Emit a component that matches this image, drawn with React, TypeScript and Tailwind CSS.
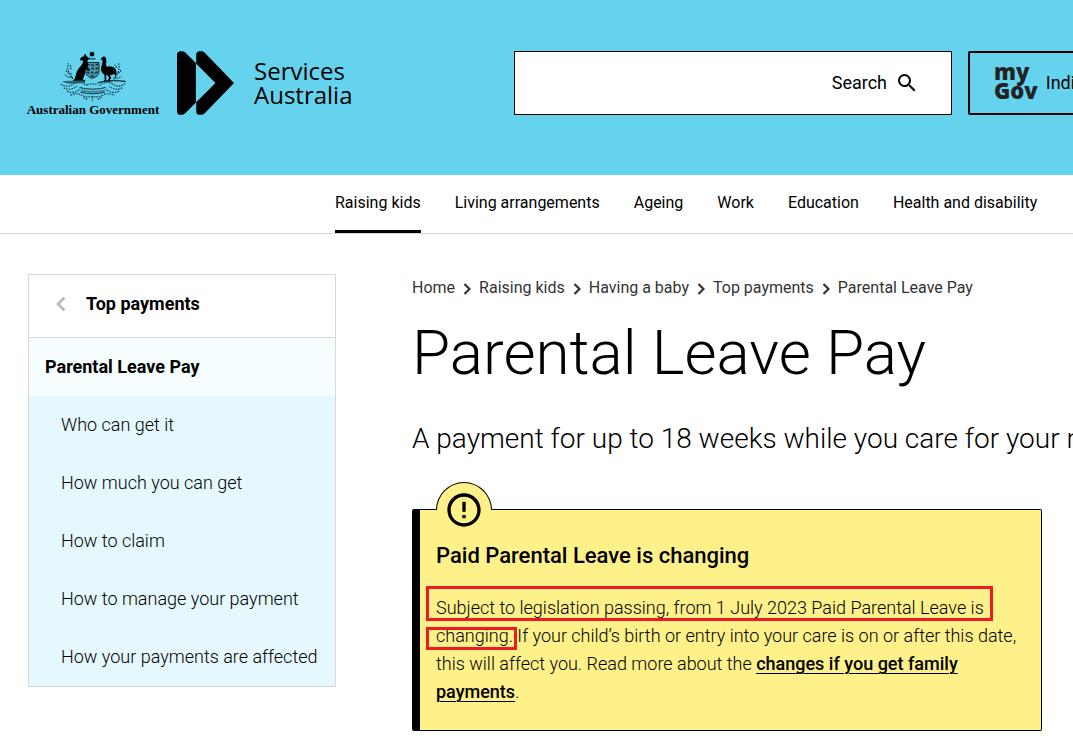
import { Fragment } from 'react';
import { MdErrorOutline, MdSearch } from 'react-icons/md';

const navItems = ['Raising kids', 'Living arrangements', 'Ageing', 'Work', 'Education', 'Health and disability'];

const breadcrumbs = ['Home', 'Raising kids', 'Having a baby', 'Top payments', 'Parental Leave Pay'];

const sideLinks = [
  'Who can get it',
  'How much you can get',
  'How to claim',
  'How to manage your payment',
  'How your payments are affected',
];

function CoatOfArms() {
  return (
    <svg viewBox="0 0 204 152" className="h-[51px] w-[68px]" aria-hidden="true">
      {/* Star */}
      <path d="M99 0l2 4 5-2-2 5 4 2-4 2 2 5-5-2-2 4-2-4-5 2 2-5-4-2 4-2-2-5 5 2z" />
      <path d="M89 23h20" stroke="#000" strokeWidth="4" strokeDasharray="4 1.5" />
      {/* Shield */}
      <path d="M80 34h40v28q0 13-20 20-20-7-20-20z" fill="#4594a8" stroke="#12323a" strokeWidth="3" />
      <path
        d="M82 41h10M97 40l7 4M110 40h8M84 51l9 4M98 52h7M110 54l7-4M84 63l8 3M97 62l6 5M108 66l8-4M95 75h10"
        stroke="#0d262d"
        strokeWidth="4"
        fill="none"
      />
      {/* Kangaroo */}
      <path d="M77 9l-3 7-5 1-6 6 1 4 8 1c0 8-3 12-8 18-7 8-13 17-14 28-1 7-4 11-9 15l8 4h28l2-6-8-2c5-8 7-15 7-23l2-9 8 7 4-1-6-9c2-9 1-16-1-23 5-2 6-6 3-9l-6-3-2-7z" />
      {/* Emu */}
      <path d="M124 25l5-6q4-5 9-2 4 3 4 10c0 8-2 13 1 20 8-4 19-2 25 5 6 8 6 17 2 25l-5-9c-4 4-9 5-13 5l5 7-5 8 6 4h-13l5-12-5-8-4 1 1 13 5 5h-14l4-5-1-16c-7-4-11-11-10-19 1-7 6-14 4-25z" />
      {/* Ground and scroll */}
      <path d="M8 92q16-5 30-3l36-1 4 7-36 2q-18 2-34-5z" fill="#2c6472" />
      <path d="M200 91q-40-6-72 1l-12 3" fill="none" stroke="#12323a" strokeWidth="4" />
      <path d="M62 109q38 10 78 0M64 123q38 10 74 0" fill="none" stroke="#12323a" strokeWidth="3" />
      <path d="M68 118q34 8 68 0" fill="none" stroke="#12323a" strokeWidth="6" strokeDasharray="3 3" />
      {/* Wattle */}
      <g fill="none" stroke="#1c4c58" strokeWidth="4" strokeDasharray="5 3">
        <path d="M42 83C30 68 22 52 28 36M38 68q-12 0-18-12M41 78q-16 2-24-8M36 54l-2-14" />
        <path d="M164 85c12-15 20-31 14-49M170 68q12 0 16-12M164 80q16 4 23-6M173 50l-6-10" />
        <path d="M5 99q20 12 38 0t40 4M199 97q-20 14-38 2t-40 4" />
        <path d="M14 110q20 10 40-5M190 110q-20 10-40-5M24 120q24 10 40-7M180 120q-24 10-40-7" />
        <path d="M34 132q24-8 34 0 16 8 32 4 16 4 32-4 12-8 36 0M73 139l12 6M128 139l-12 6M100 136v14M84 101q16-6 32 0" />
      </g>
    </svg>
  );
}

function ServicesMark() {
  return (
    <svg viewBox="0 0 172 192" className="h-16 w-[57px]" aria-hidden="true">
      <path d="M0 11Q0 0 11 0h5q5 0 9 4l32 32v119l-32 32q-5 5-10 5h-4Q0 192 0 181z" />
      <path d="M58 11Q58 0 69 0h5q5 0 9 4l89 92-89 92q-4 4-9 4h-5q-11 0-11-11v-27l58-58-58-58z" />
    </svg>
  );
}

function Header() {
  return (
    <header className="bg-[#66d3ee] pt-[51px] pb-[60px] pl-7">
      <div className="flex h-16 gap-4">
        <a href="#home" className="flex w-[470px] shrink-0 items-start">
          <span className="flex w-[130px] flex-col items-center">
            <CoatOfArms />
            <span className="font-['Liberation_Serif',serif] text-[13px] leading-4 font-bold whitespace-nowrap">
              Australian Government
            </span>
          </span>
          <span className="ml-[19px]">
            <ServicesMark />
          </span>
          <span className="ml-5 pt-2 font-['Open_Sans',sans-serif] text-2xl leading-6">
            Services
            <br />
            Australia
          </span>
        </a>

        <form className="flex min-w-[438px] flex-1 border border-black bg-white" role="search">
          <input type="text" aria-label="Search this site" className="min-w-0 flex-1 px-4 text-lg outline-none" />
          <button type="button" className="flex items-center gap-2 pr-8 text-lg">
            Search
            <MdSearch className="size-6" />
          </button>
        </form>

        <button type="button" className="flex shrink-0 items-center gap-2 rounded-xs border-2 border-black px-6 text-lg">
          <span className="pb-1 text-left font-['Open_Sans',sans-serif] text-[22px] leading-[19px] font-extrabold text-[#222]">
            my
            <br />
            Gov
          </span>
          Individuals
        </button>
      </div>
    </header>
  );
}

function MainNav() {
  return (
    <nav className="border-b border-[#d8d8d8] pl-[335px]">
      <ul className="flex h-[58px] gap-[34px] whitespace-nowrap">
        {navItems.map((item, i) => (
          <li key={item} className="flex">
            <a
              href="#nav"
              className={`flex items-center border-b-3 ${i === 0 ? 'border-black' : 'border-transparent'}`}
            >
              {item}
            </a>
          </li>
        ))}
      </ul>
    </nav>
  );
}

function SideMenu() {
  return (
    <aside className="w-[308px] shrink-0 self-start border border-[#d8d8d8] text-lg">
      <a
        href="#top-payments"
        className="flex h-[63px] items-center gap-5 border-b border-[#d8d8d8] pb-1 pl-[27px] font-bold"
      >
        <svg viewBox="0 0 10 16" className="h-4 w-2.5 text-[#b8b8b8]" aria-hidden="true">
          <path d="M8.5 1.5L2 8l6.500 6.500" fill="none" stroke="currentColor" strokeWidth="2.600" />
        </svg>
        Top payments
      </a>
      <a href="#parental-leave-pay" className="flex h-[58px] items-center bg-[#f5fdff] pl-4 font-bold">
        Parental Leave Pay
      </a>
      <ul className="bg-[#e5f8fe] font-light">
        {sideLinks.map((link) => (
          <li key={link}>
            <a href="#section" className="flex h-[58px] items-center pl-8">
              {link}
            </a>
          </li>
        ))}
      </ul>
    </aside>
  );
}

function ChangeNotice() {
  return (
    <section className="relative mt-[50px] max-w-[630px] rounded-xs border border-l-8 border-black bg-[#fff18a] pt-7 pr-4 pb-6 pl-4">
      {/* Icon tab */}
      <div className="absolute -top-7 left-4 h-7 w-14 rounded-t-full border border-b-0 border-black bg-[#fff18a]">
        <MdErrorOutline className="absolute top-[7px] left-[7px] size-10" />
      </div>

      <h2 className="text-[22px] leading-9 font-medium">Paid Parental Leave is changing</h2>
      <p className="mt-5 text-lg leading-7 font-light">
        Subject to legislation passing, from 1 July 2023 Paid Parental Leave is changing. If your child’s birth or
        entry into your care is on or after this date, this will affect you. Read more about the{' '}
        <a href="#changes" className="font-medium underline decoration-1 underline-offset-3">
          changes if you get family payments
        </a>
        .
      </p>

      {/* Highlight boxes */}
      <div className="pointer-events-none absolute top-[76px] left-1.5 h-[35px] w-[567px] border-3 border-[#ed1c24]" />
      <div className="pointer-events-none absolute top-[117px] left-1.5 h-[23px] w-[91px] border-3 border-[#ed1c24]" />
    </section>
  );
}

export default function App() {
  return (
    <div className="min-h-screen overflow-x-hidden bg-white font-['Roboto',sans-serif] text-black">
      <Header />
      <MainNav />
      <div className="flex gap-[76px] px-7 pt-10 pb-6">
        <SideMenu />
        <main className="min-w-0 flex-1">
          <nav aria-label="Breadcrumb" className="flex items-center gap-2 leading-7 whitespace-nowrap text-[#333]">
            {breadcrumbs.map((crumb, i) => (
              <Fragment key={crumb}>
                {i > 0 && (
                  <svg viewBox="0 0 8 12" className="mt-0.5 h-3 w-2" aria-hidden="true">
                    <path d="M1.5 1l5 5-5 5" fill="none" stroke="currentColor" strokeWidth="2.200" />
                  </svg>
                )}
                <a href="#crumb">{crumb}</a>
              </Fragment>
            ))}
          </nav>
          <h1 className="mt-[15px] text-[62px] leading-[72px] font-light">Parental Leave Pay</h1>
          <p className="mt-[30px] text-[28px] leading-10 font-light whitespace-nowrap">
            A payment for up to 18 weeks while you care for your new child.
          </p>
          <ChangeNotice />
        </main>
      </div>
    </div>
  );
}
